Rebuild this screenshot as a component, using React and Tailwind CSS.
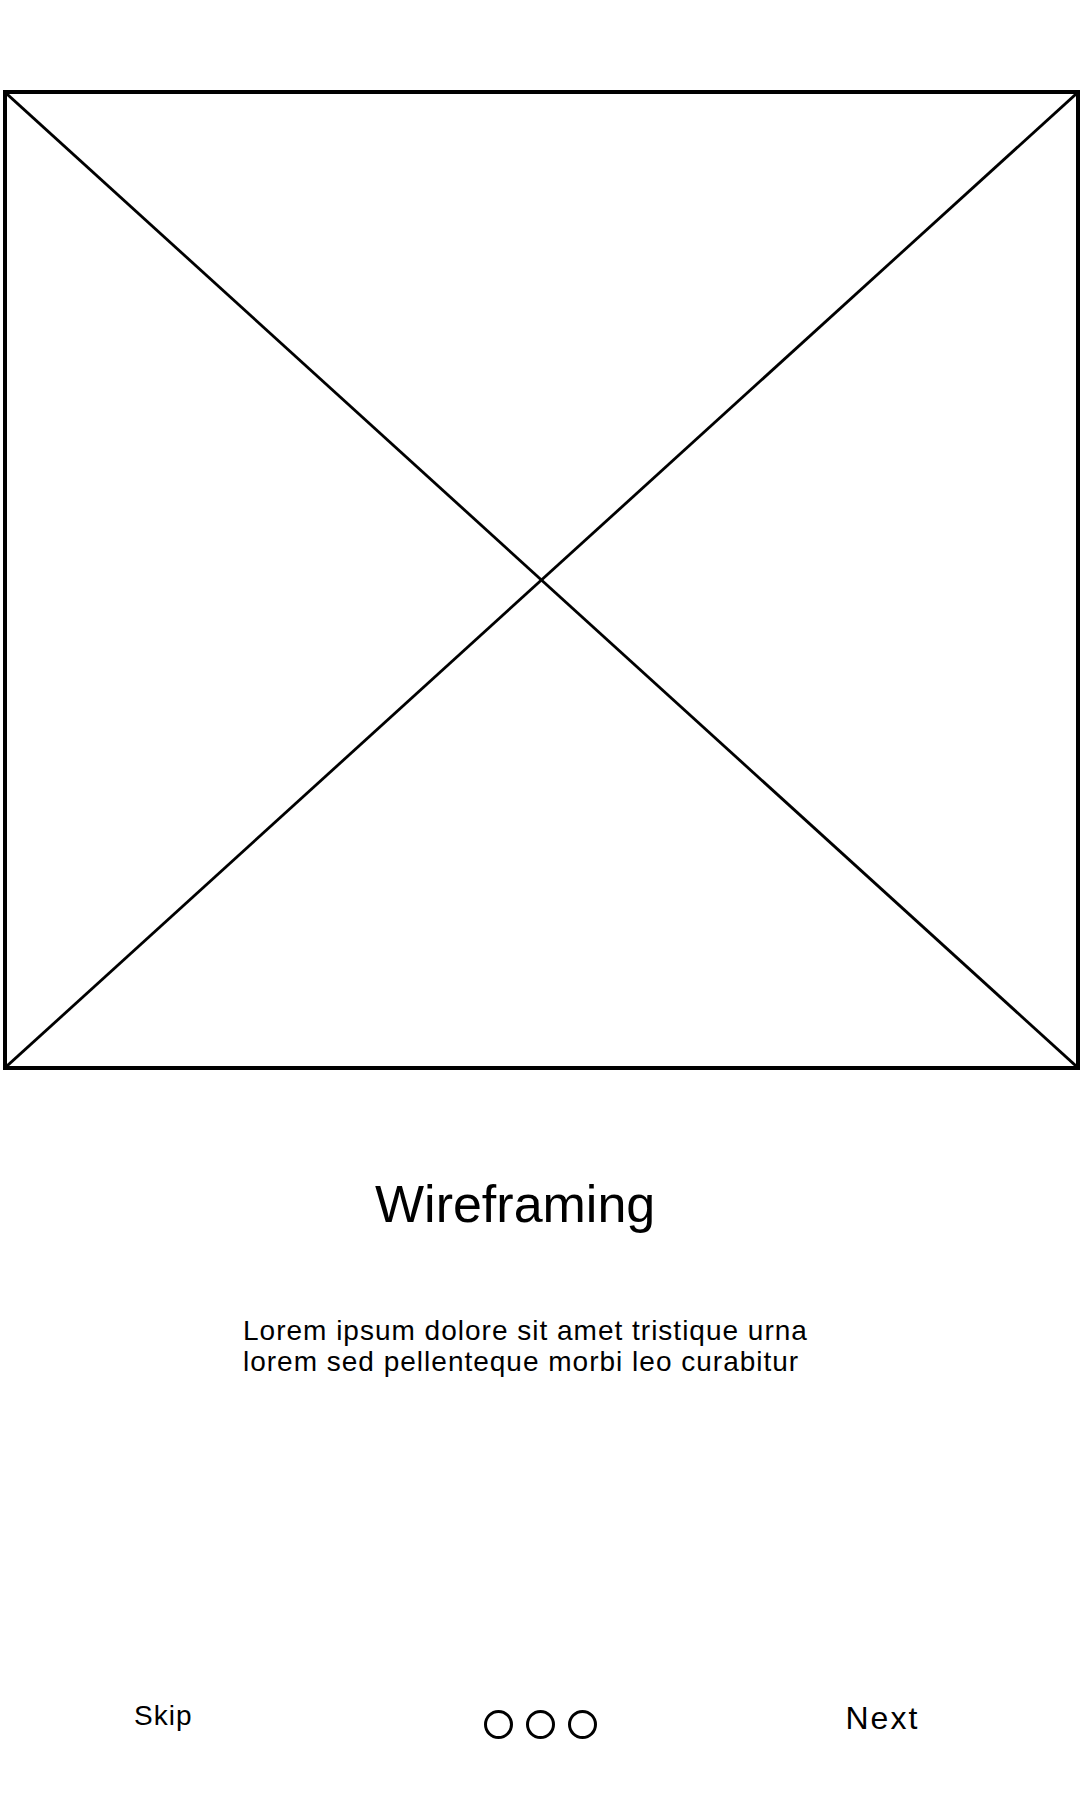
import React from 'react';

const Placeholder = () => (
  <div className="relative ml-[3px] mt-[90px] h-[980px] w-[1077px] border-[4px] border-black">
    <svg className="absolute inset-0 h-full w-full" viewBox="0 0 100 100" preserveAspectRatio="none">
      <line x1="0" y1="0" x2="100" y2="100" stroke="#000" strokeWidth="2.8" vectorEffect="non-scaling-stroke" />
      <line x1="100" y1="0" x2="0" y2="100" stroke="#000" strokeWidth="2.8" vectorEffect="non-scaling-stroke" />
    </svg>
  </div>
);

const Dots = () => (
  <div className="ml-[292px] mt-[8px] flex gap-[13px]">
    <span className="block h-[29px] w-[29px] rounded-full border-[3px] border-black"></span>
    <span className="block h-[29px] w-[29px] rounded-full border-[3px] border-black"></span>
    <span className="block h-[29px] w-[29px] rounded-full border-[3px] border-black"></span>
  </div>
);

export default function App() {
  return (
    <div className="h-[1800px] w-[1080px] overflow-hidden bg-white text-black font-['Liberation_Sans',Arial,sans-serif]">
      <Placeholder />

      <h1 className="ml-[375px] mt-[108px] text-[52px] leading-none font-normal">Wireframing</h1>

      <p className="ml-[243px] mt-[85px] text-[28px] leading-[31px] tracking-[1px]">
        Lorem ipsum dolore sit amet tristique urna
        <br />
        lorem sed pellenteque morbi leo curabitur
      </p>

      <div className="mt-[325px] flex items-start">
        <button className="ml-[134px] text-[28px] leading-none tracking-[1px]">Skip</button>
        <Dots />
        <button className="ml-[248px] text-[32px] leading-none tracking-[2px]">Next</button>
      </div>
    </div>
  );
}
